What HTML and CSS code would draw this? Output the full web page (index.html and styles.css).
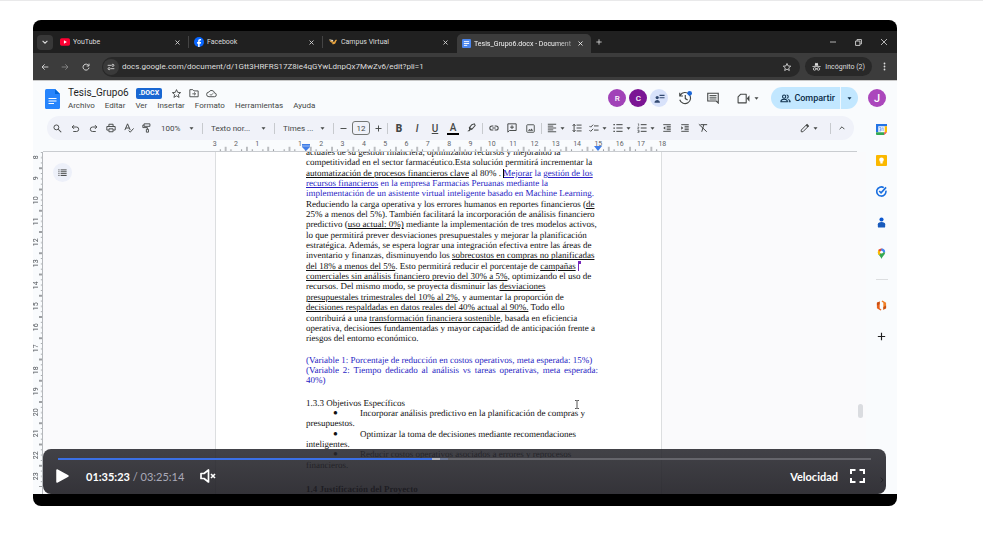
FILE: index.html
```html
<!DOCTYPE html>
<html lang="es">
<head>
<meta charset="utf-8">
<meta name="viewport" content="width=device-width, initial-scale=1">
<title>Grabación de clase</title>
<link rel="stylesheet" href="styles.css">
</head>
<body>
<svg class="sprite" aria-hidden="true">
  <symbol id="caret" viewBox="0 0 10 6"><path d="M1 0.5h8L5 5.5z" fill="currentColor"/></symbol>
  <symbol id="close" viewBox="0 0 10 10"><path d="M1 1l8 8M9 1l-8 8" stroke="currentColor" stroke-width="1.7" fill="none"/></symbol>
  <symbol id="star" viewBox="0 0 24 24"><path d="M12 3.5l2.6 6 6.4.5-4.900 4.200 1.500 6.300L12 17.100l-5.600 3.400 1.500-6.300L3 10l6.400-.5z" stroke="currentColor" stroke-width="2" fill="none"/></symbol>
  <symbol id="plus" viewBox="0 0 24 24"><path d="M12 4v16M4 12h16" stroke="currentColor" stroke-width="2.500" fill="none"/></symbol>
  <symbol id="docs" viewBox="0 0 24 24"><rect width="24" height="24" rx="3" fill="#4a86f0"/><path d="M5 7h14M5 12h14M5 17h9" stroke="#fff" stroke-width="2.500"/></symbol>
  <symbol id="indentlines" viewBox="0 0 24 24"><path d="M3 4h18M11 8h10M11 12h10M11 16h10M3 20h18" stroke="currentColor" stroke-width="2.200"/></symbol>
</svg>

<main class="player">
  <div class="video">
    <header class="tabs">
      <button class="tab-search" aria-label="Buscar pestañas"><svg class="i6" viewBox="0 0 10 10"><path d="M1 3l4 4 4-4" stroke="currentColor" stroke-width="1.800" fill="none"/></svg></button>
      <div class="tab">
        <svg class="i10" viewBox="0 0 24 24"><rect y="3" width="24" height="18" rx="4" fill="#f03"/><path d="M9.500 8v8l7-4z" fill="#fff"/></svg>
        <span class="tab-name">YouTube</span>
        <button aria-label="Cerrar YouTube"><svg class="i5"><use href="#close"/></svg></button>
      </div>
      <div class="tab">
        <svg class="i10" viewBox="0 0 24 24"><circle cx="12" cy="12" r="12" fill="#0866ff"/><path d="M10 24v-8H7.500v-4H10v-2c0-4 2-5.500 5.500-5.200l1.500.2v3.300h-2c-1.300 0-1.600.7-1.600 1.700v2H17l-.7 4h-2.900v8z" fill="#fff"/></svg>
        <span class="tab-name">Facebook</span>
        <button aria-label="Cerrar Facebook"><svg class="i5"><use href="#close"/></svg></button>
      </div>
      <div class="tab">
        <svg class="i10" viewBox="0 0 24 24"><path d="M2 6c4 5 7 2 9 4s3 2 5 0c1-3 3-4 6-3-2 1-2 3-3 5-1 5-6 7-10 4 2 0 3-1 3-2-4 0-8-2-10-8z" fill="#e8a33d"/><path d="M3 5c3 2 7 1 9 3s0 3-2 2-6-1-7-5z" fill="#f2e4c8"/></svg>
        <span class="tab-name">Campus Virtual</span>
        <button aria-label="Cerrar Campus Virtual"><svg class="i5"><use href="#close"/></svg></button>
      </div>
      <div class="tab tab-active">
        <svg class="i9"><use href="#docs"/></svg>
        <span class="tab-name">Tesis_Grupo6.docx - Document</span>
        <button aria-label="Cerrar Tesis_Grupo6"><svg class="i5"><use href="#close"/></svg></button>
      </div>
      <button class="tab-new" aria-label="Nueva pestaña"><svg class="i8"><use href="#plus"/></svg></button>
      <div class="window-buttons">
        <button aria-label="Minimizar"><svg class="i6" viewBox="0 0 10 10"><path d="M0 5h10" stroke="currentColor" stroke-width="1.300"/></svg></button>
        <button aria-label="Restaurar"><svg class="i7" viewBox="0 0 12 12"><path d="M1 3.500h7.500V11H1zM3.500 3V1H11v7.500H9" stroke="currentColor" stroke-width="1.500" fill="none"/></svg></button>
        <button aria-label="Cerrar ventana"><svg class="i6" viewBox="0 0 10 10"><path d="M0 0l10 10M10 0L0 10" stroke="currentColor" stroke-width="1.300"/></svg></button>
      </div>
    </header>

    <div class="address">
      <button aria-label="Atrás"><svg class="i8" viewBox="0 0 24 24"><path d="M22 12H4M11 4l-8 8 8 8" stroke="currentColor" stroke-width="2.600" fill="none"/></svg></button>
      <button class="dim" aria-label="Adelante"><svg class="i8" viewBox="0 0 24 24"><path d="M2 12h18M13 4l8 8-8 8" stroke="currentColor" stroke-width="2.600" fill="none"/></svg></button>
      <button aria-label="Recargar"><svg class="i8" viewBox="0 0 24 24"><path d="M20 8a9 9 0 1 0 1 6M21 2v7h-7" stroke="currentColor" stroke-width="2.800" fill="none"/></svg></button>
      <div class="omnibox">
        <button class="site-info" aria-label="Información del sitio"><svg class="i8" viewBox="0 0 24 24"><path d="M2 7h10M12 17h10" stroke="currentColor" stroke-width="2.600"/><circle cx="17.500" cy="7" r="3.200" stroke="currentColor" stroke-width="2.600" fill="none"/><circle cx="6.500" cy="17" r="3.200" stroke="currentColor" stroke-width="2.600" fill="none"/></svg></button>
        <input class="url" type="text" aria-label="Dirección" value="docs.google.com/document/d/1Gtt3HRFRS17Z8ie4qGYwLdnpQx7MwZv6/edit?pli=1">
        <button aria-label="Añadir a marcadores"><svg class="i10"><use href="#star"/></svg></button>
      </div>
      <button class="incognito"><svg class="i9" viewBox="0 0 24 24"><path d="M7 10l2-8 3 1 3-1 2 8zM1 11h22v2.500H1z" fill="currentColor"/><g fill="none" stroke="currentColor" stroke-width="2.200"><circle cx="7" cy="18.500" r="3.500"/><circle cx="17" cy="18.500" r="3.500"/><path d="M10 18h4"/></g></svg>Incógnito (2)</button>
      <button class="more" aria-label="Más"><svg class="i9" viewBox="0 0 24 24"><g fill="currentColor"><circle cx="12" cy="4" r="2.400"/><circle cx="12" cy="12" r="2.400"/><circle cx="12" cy="20" r="2.400"/></g></svg></button>
    </div>

    <div class="app">
      <header class="doc-header">
        <svg class="doc-logo" viewBox="0 0 30 40"><path d="M3 0h17l10 10v27a3 3 0 0 1-3 3H3a3 3 0 0 1-3-3V3a3 3 0 0 1 3-3z" fill="#2684fc"/><path d="M20 0l10 10H20z" fill="#0066da"/><path d="M7 19h16M7 24h16M7 29h11" stroke="#fff" stroke-width="2.200"/></svg>
        <div class="doc-id">
          <div class="doc-title">
            <h1>Tesis_Grupo6</h1><span class="badge">.DOCX</span>
            <button aria-label="Destacar"><svg class="i11"><use href="#star"/></svg></button>
            <button aria-label="Mover"><svg class="i10" viewBox="0 0 24 24"><path d="M2 4h7l3 3h10v14H2z" fill="none" stroke="currentColor" stroke-width="2.200"/><path d="M8 14h7M12 10.500l4 3.500-4 3.500" fill="none" stroke="currentColor" stroke-width="2"/></svg></button>
            <button aria-label="Estado"><svg class="i11" viewBox="0 0 24 24"><path d="M6.500 19a5 5 0 0 1-.3-10A6.500 6.500 0 0 1 18.500 11a4 4 0 0 1 0 8z" fill="none" stroke="currentColor" stroke-width="2"/><path d="M8.500 13.500l2.500 2.500 4.500-4.500" fill="none" stroke="currentColor" stroke-width="1.800"/></svg></button>
          </div>
          <nav class="menus"><button>Archivo</button><button>Editar</button><button>Ver</button><button>Insertar</button><button>Formato</button><button>Herramientas</button><button>Ayuda</button></nav>
        </div>
        <div class="doc-actions">
          <div class="people"><span class="avatar">R</span><span class="avatar avatar-dark">C</span><button class="avatar avatar-chat" aria-label="Chat"><svg class="i11" viewBox="0 0 24 24"><circle cx="7" cy="10" r="3.500" fill="currentColor"/><path d="M1 21c0-4 3-6 6-6s6 2 6 6zM12 4h11v2.500H12zM12 9h11v2.500H12z" fill="currentColor"/></svg></button></div>
          <button class="round" aria-label="Historial"><svg class="i14" viewBox="0 0 24 24"><path d="M4 7a9.500 9.500 0 1 1-1 8M3 3v5.500h5.500M12.500 7v6l4 2.500" fill="none" stroke="currentColor" stroke-width="2"/><circle cx="20" cy="4" r="4" fill="#1a66d8"/></svg></button>
          <button class="round" aria-label="Comentarios"><svg class="i12" viewBox="0 0 24 24"><path d="M1.500 2.500h21V22l-4-4h-17z" fill="none" stroke="currentColor" stroke-width="2.200"/><path d="M5 7h14M5 10.500h14M5 14h14" stroke="currentColor" stroke-width="1.800"/></svg></button>
          <button class="meet" aria-label="Reunión"><svg class="i13" viewBox="0 0 24 24"><path d="M7 4h10v16H2V9z" fill="none" stroke="currentColor" stroke-width="2" stroke-linejoin="round"/><path d="M18 12l5-6v12z" fill="currentColor"/></svg><svg class="caret"><use href="#caret"/></svg></button>
          <div class="share">
            <button class="share-main"><svg class="i11" viewBox="0 0 24 24"><g fill="none" stroke="currentColor" stroke-width="2.200"><circle cx="9" cy="8" r="3.500"/><path d="M2 19v-1c0-3 4-4.500 7-4.500s7 1.500 7 4.500v1zM14.500 4.500a3.500 3.500 0 0 1 0 7M18 14c2.500.8 4 2 4 4v1h-3"/></g></svg>Compartir</button>
            <button class="share-more" aria-label="Más opciones para compartir"><svg class="caret"><use href="#caret"/></svg></button>
          </div>
          <span class="avatar avatar-me">J</span>
        </div>
      </header>

      <div class="workspace">
        <section class="editor">
          <div class="toolbar">
            <button class="tool" aria-label="Buscar"><svg class="i9" viewBox="0 0 24 24"><circle cx="9" cy="9" r="6.500" fill="none" stroke="currentColor" stroke-width="2.500"/><path d="M14 14l8 8" stroke="currentColor" stroke-width="2.800"/></svg></button>
            <button class="tool" aria-label="Deshacer"><svg class="i9" viewBox="0 0 24 24"><path d="M8 3L3 8l5 5M3 8h11.500a5.500 5.500 0 0 1 0 12H6" fill="none" stroke="currentColor" stroke-width="2.500"/></svg></button>
            <button class="tool" aria-label="Rehacer"><svg class="i9" viewBox="0 0 24 24"><path d="M16 3l5 5-5 5M21 8H9.500a5.500 5.500 0 0 0 0 12H18" fill="none" stroke="currentColor" stroke-width="2.500"/></svg></button>
            <button class="tool" aria-label="Imprimir"><svg class="i10" viewBox="0 0 24 24"><path d="M7 8V3h10v5M6 17H2V8.500h20V17h-4M7 14h10v7H7z" fill="none" stroke="currentColor" stroke-width="2.300"/></svg></button>
            <button class="tool" aria-label="Ortografía"><svg class="i10" viewBox="0 0 24 24"><path d="M2 17L8.500 2 15 17M4.500 12h8M11 18l4 4 8-9" fill="none" stroke="currentColor" stroke-width="2.300"/></svg></button>
            <button class="tool" aria-label="Copiar formato"><svg class="i10" viewBox="0 0 24 24"><path d="M5 2h14v6H5zM5 5H2v6h11v4M10.500 15h5v7h-5z" fill="none" stroke="currentColor" stroke-width="2.200"/></svg></button>
            <label class="pick pick-zoom"><select aria-label="Zoom"><option>100%</option></select><svg class="caret"><use href="#caret"/></svg></label>
            <i class="sep"></i>
            <label class="pick pick-style"><select aria-label="Estilo"><option>Texto nor...</option></select><svg class="caret"><use href="#caret"/></svg></label>
            <i class="sep"></i>
            <label class="pick pick-font"><select aria-label="Fuente"><option>Times ...</option></select><svg class="caret"><use href="#caret"/></svg></label>
            <i class="sep"></i>
            <button class="step" aria-label="Reducir tamaño"><svg class="i9" viewBox="0 0 24 24"><path d="M4 12h16" stroke="currentColor" stroke-width="2.500"/></svg></button>
            <input class="size" type="text" aria-label="Tamaño de fuente" value="12">
            <button class="step" aria-label="Aumentar tamaño"><svg class="i9"><use href="#plus"/></svg></button>
            <i class="sep"></i>
            <button class="tool glyph bold">B</button>
            <button class="tool glyph italic">I</button>
            <button class="tool glyph under">U</button>
            <button class="tool glyph color">A</button>
            <button class="tool" aria-label="Resaltar"><svg class="i10" viewBox="0 0 24 24"><path d="M14 4l6-2 2 4-8 9-5 1-1-5zM9 11l5 4" fill="none" stroke="currentColor" stroke-width="2.500"/><path d="M3 20l6-5 2 2-3 3z" fill="currentColor"/></svg></button>
            <i class="sep"></i>
            <button class="tool" aria-label="Enlace"><svg class="i10" viewBox="0 0 24 24"><path d="M10.500 7H7a5 5 0 0 0 0 10h3.500M13.500 7H17a5 5 0 0 1 0 10h-3.500M8 12h8" fill="none" stroke="currentColor" stroke-width="2.500"/></svg></button>
            <button class="tool" aria-label="Comentar"><svg class="i10" viewBox="0 0 24 24"><path d="M2 2h20v16H6l-4 4zM12 5.500v9M7.500 10h9" fill="none" stroke="currentColor" stroke-width="2.300"/></svg></button>
            <button class="tool" aria-label="Imagen"><svg class="i9" viewBox="0 0 24 24"><rect x="2" y="2" width="20" height="20" rx="2" fill="none" stroke="currentColor" stroke-width="2.400"/><path d="M5 18l4-5 3 3 3-4 4 6z" fill="currentColor"/></svg></button>
            <i class="sep"></i>
            <button class="split" aria-label="Alinear"><svg class="i10" viewBox="0 0 24 24"><path d="M2 3h20M2 7.500h13M2 12h20M2 16.500h13M2 21h20" stroke="currentColor" stroke-width="2.200"/></svg><svg class="caret"><use href="#caret"/></svg></button>
            <button class="tool" aria-label="Interlineado"><svg class="i10" viewBox="0 0 24 24"><path d="M11 5h12M11 12h12M11 19h12M5 3v18M1.500 7L5 3l3.500 4M1.500 17L5 21l3.500-4" fill="none" stroke="currentColor" stroke-width="2.300"/></svg></button>
            <button class="split" aria-label="Lista de control"><svg class="i10" viewBox="0 0 24 24"><path d="M12 7h11M12 17h11M1 7l3 3 6-6M1 17l3 3 6-6" fill="none" stroke="currentColor" stroke-width="2.300"/></svg><svg class="caret"><use href="#caret"/></svg></button>
            <button class="split" aria-label="Lista con viñetas"><svg class="i10" viewBox="0 0 24 24"><path d="M8 4h15M8 12h15M8 20h15" stroke="currentColor" stroke-width="2.400"/><path d="M1 2.500h3.500v3H1zM1 10.500h3.500v3H1zM1 18.500h3.500v3H1z" fill="currentColor"/></svg><svg class="caret"><use href="#caret"/></svg></button>
            <button class="split" aria-label="Lista numerada"><svg class="i10" viewBox="0 0 24 24"><path d="M9 4h14M9 12h14M9 20h14" stroke="currentColor" stroke-width="2.400"/><path d="M2 2h2v5M1 10h4l-3.500 4H5M1 17.500h4v5H1M2.500 20H5" fill="none" stroke="currentColor" stroke-width="1.500"/></svg><svg class="caret"><use href="#caret"/></svg></button>
            <button class="tool" aria-label="Reducir sangría"><svg class="i10" viewBox="0 0 24 24"><use href="#indentlines"/><path d="M8 8v8l-5-4z" fill="currentColor"/></svg></button>
            <button class="tool" aria-label="Aumentar sangría"><svg class="i10" viewBox="0 0 24 24"><use href="#indentlines"/><path d="M3 8v8l5-4z" fill="currentColor"/></svg></button>
            <button class="tool" aria-label="Borrar formato"><svg class="i10" viewBox="0 0 24 24"><path d="M6 4h16M14 4l-5 17M2 3l19 18" fill="none" stroke="currentColor" stroke-width="2.400"/></svg></button>
            <button class="split mode" aria-label="Modo de edición"><svg class="i10" viewBox="0 0 24 24"><path d="M3 21v-4L16 4l4 4L7 21z" fill="none" stroke="currentColor" stroke-width="2.400"/><path d="M14 6l3-4 5 5-4 3z" fill="currentColor"/></svg><svg class="caret"><use href="#caret"/></svg></button>
            <i class="sep"></i>
            <button class="tool" aria-label="Ocultar menús"><svg class="i6" viewBox="0 0 10 10"><path d="M1 7l4-4 4 4" stroke="currentColor" stroke-width="1.600" fill="none"/></svg></button>
          </div>

          <div class="ruler-h">
            <div class="ruler-scale">
              <svg class="ticks-h" viewBox="0 0 84 6" preserveAspectRatio="none"><defs><pattern id="th" width="4" height="6" patternUnits="userSpaceOnUse"><path d="M1 4v2M3 4v2" stroke="#9a9da1" stroke-width=".2"/><path d="M2 1v5" stroke="#85888c" stroke-width=".2"/></pattern></defs><rect width="84" height="6" fill="url(#th)"/></svg>
              <ol class="marks-h"><li>3</li><li>2</li><li>1</li><li></li><li>1</li><li>2</li><li>3</li><li>4</li><li>5</li><li>6</li><li>7</li><li>8</li><li>9</li><li>10</li><li>11</li><li>12</li><li>13</li><li>14</li><li>15</li><li>16</li><li>17</li><li>18</li></ol>
              <svg class="stop stop-left" viewBox="0 0 8 7"><path d="M0 0h8v3L4 7 0 3z" fill="#3f7de8"/><path d="M0 2h8" stroke="#fff" stroke-width=".5"/></svg>
              <svg class="stop stop-right" viewBox="0 0 8 7"><path d="M0 2h8L4 7z" fill="#3f7de8"/></svg>
            </div>
          </div>

          <div class="stage">
            <div class="ruler-v">
              <ol><li>8</li><li>9</li><li>10</li><li>11</li><li>12</li><li>13</li><li>14</li><li>15</li><li>16</li><li>17</li><li>18</li><li>19</li><li>20</li><li>21</li><li>22</li><li>23</li></ol>
              <svg class="ticks-v" viewBox="0 0 5 64" preserveAspectRatio="none"><defs><pattern id="tv" width="5" height="4" patternUnits="userSpaceOnUse"><path d="M3 1h2M3 3h2M3 2h2" stroke="#a5a8ac" stroke-width=".2"/><path d="M0 0h5M0 4h5" stroke="#7d8084" stroke-width=".3"/></pattern></defs><rect width="5" height="64" fill="url(#tv)"/></svg>
            </div>
            <div class="canvas">
              <div class="outline"><button aria-label="Mostrar esquema"><svg class="i9" viewBox="0 0 24 24"><path d="M7 5h16M7 10h16M7 15h16M7 20h16M1 5h3M1 10h3M1 15h3M1 20h3" stroke="currentColor" stroke-width="2.500"/></svg></button></div>
              <article class="page">
                <p>
                  <span class="ln">actuales de su gestión financiera, optimizando recursos y mejorando la</span>
                  <span class="ln">competitividad en el sector farmacéutico.Esta solución permitirá incrementar la</span>
                  <span class="ln"><u>automatización de procesos financieros clave</u> al 80% . <i class="cursor"></i><span class="blue"><u>Mejorar</u> la <u>gestión de los</u></span></span>
                  <span class="ln blue"><u>recursos financieros</u> en la empresa Farmacias Peruanas mediante la</span>
                  <span class="ln blue">implementación de un asistente virtual inteligente basado en Machine Learning.</span>
                  <span class="ln">Reduciendo la carga operativa y los errores humanos en reportes financieros (<u>de</u></span>
                  <span class="ln">25% a menos del 5%). También facilitará la incorporación de análisis financiero</span>
                  <span class="ln">predictivo (<u>uso actual: 0%)</u> mediante la implementación de tres modelos activos,</span>
                  <span class="ln">lo que permitirá prever desviaciones presupuestales y mejorar la planificación</span>
                  <span class="ln">estratégica. Además, se espera lograr una integración efectiva entre las áreas de</span>
                  <span class="ln">inventario y finanzas, disminuyendo los <u>sobrecostos en compras no planificadas</u></span>
                  <span class="ln"><u>del 18% a menos del 5%</u>. Esto permitirá reducir el porcentaje de <u>campañas</u> <i class="cursor peer"></i></span>
                  <span class="ln"><u>comerciales sin análisis financiero previo del 30% a 5%</u>, optimizando el uso de</span>
                  <span class="ln">recursos. Del mismo modo, se proyecta disminuir las <u>desviaciones</u></span>
                  <span class="ln"><u>presupuestales trimestrales del 10% al 2%</u>, y aumentar la proporción de</span>
                  <span class="ln"><u>decisiones respaldadas en datos reales del 40% actual al 90%.</u> Todo ello</span>
                  <span class="ln">contribuirá a una <u>transformación financiera sostenible</u>, basada en eficiencia</span>
                  <span class="ln">operativa, decisiones fundamentadas y mayor capacidad de anticipación frente a</span>
                  <span class="ln">riesgos del entorno económico.</span>
                </p>
                <p class="blue">
                  <span class="ln">(Variable 1: Porcentaje de reducción en costos operativos, meta esperada: 15%)</span>
                  <span class="ln wide">(Variable 2: Tiempo dedicado al análisis vs tareas operativas, meta esperada:</span>
                  <span class="ln">40%)</span>
                </p>
                <h2>1.3.3 Objetivos Específicos</h2>
                <ul>
                  <li><span class="ln first">Incorporar análisis predictivo en la planificación de compras y</span><span class="ln">presupuestos.</span></li>
                  <li><span class="ln first">Optimizar la toma de decisiones mediante recomendaciones</span><span class="ln">inteligentes.</span></li>
                  <li><span class="ln first">Reducir costos operativos asociados a errores y reprocesos</span><span class="ln">financieros.</span></li>
                </ul>
                <h2 class="strong">1.4 Justificación del Proyecto</h2>
              </article>
              <div class="gutter"><i class="scroll-thumb"></i>
                <svg class="ibeam" viewBox="0 0 6 9"><path d="M1 .5h1.500l.5.5.5-.5H5M3 1v7M1 8.500h1.500L3 8l.5.5H5" fill="none" stroke="#444" stroke-width=".9"/></svg>
              </div>
            </div>
          </div>
        </section>

        <aside class="side">
          <button aria-label="Calendar"><svg class="i11" viewBox="0 0 24 24"><path d="M1 1h22v17l-5 5H1z" fill="#fff"/><path d="M0 0h24v5H5v13H0z" fill="#2474e5"/><path d="M0 18h18v6H2a2 2 0 0 1-2-2z" fill="#34a853"/><path d="M19 5h5v13h-5z" fill="#fbbc04"/><path d="M18 18h6l-6 6z" fill="#ea4335"/><path d="M7 8h4v7H7M8 11.500h3M13.500 9l2-1v7.500" fill="none" stroke="#4285f4" stroke-width="1.500"/></svg></button>
          <button aria-label="Keep"><svg class="i11" viewBox="0 0 24 24"><rect width="24" height="24" rx="2" fill="#fbb800"/><circle cx="12" cy="10.500" r="5" fill="#fff"/><path d="M9.500 14h5v4.500h-5z" fill="#fff"/></svg></button>
          <button aria-label="Tasks"><svg class="i11" viewBox="0 0 24 24"><path d="M17 3.500A10 10 0 1 0 21.500 10" fill="none" stroke="#1a6fe0" stroke-width="3.500"/><path d="M7 11l4 4L22 3" fill="none" stroke="#1a6fe0" stroke-width="3.500"/></svg></button>
          <button aria-label="Contactos"><svg class="i11" viewBox="0 0 24 24"><circle cx="12" cy="5.500" r="4.500" fill="#0b57d0"/><path d="M4 21v-5c0-3 3-5 8-5s8 2 8 5v5c0 1-1 2-2 2H6c-1 0-2-1-2-2z" fill="#185abc"/></svg></button>
          <button aria-label="Maps"><svg class="i11" viewBox="0 0 24 24"><path d="M12 24c-1-5-8-9-8-15h16c0 6-7 10-8 15z" fill="#34a853"/><path d="M4 9c0 3 1 5 3 7l6-8-7-5a8 8 0 0 0-2 6z" fill="#fbbc04"/><path d="M5 4.500l5 5L16 2A9 9 0 0 0 5 4.500z" fill="#ea4335"/><path d="M12 1a8 8 0 0 1 8 8h-6L11 5z" fill="#4285f4"/><circle cx="12" cy="9" r="3" fill="#fff"/></svg></button>
          <hr>
          <button aria-label="Complemento"><svg class="i11" viewBox="0 0 24 24"><path d="M2 6l6-3v15l4 3-2 2-8-5z" fill="#e8601a"/><path d="M22 18l-6 3V6l-4-3 2-2 8 5z" fill="#f08028"/><path d="M2 6l6-3v6l-6 3zM22 18l-6 3v-6l6-3z" fill="#c94f12"/></svg></button>
          <button aria-label="Obtener complementos"><svg class="i11"><use href="#plus"/></svg></button>
          <button class="side-hide" aria-label="Ocultar panel"><svg class="i6" viewBox="0 0 10 10"><path d="M3 1l4 4-4 4" stroke="currentColor" stroke-width="1.600" fill="none"/></svg></button>
        </aside>
      </div>
    </div>
  </div>

  <div class="controls">
    <input class="seek" type="range" min="0" max="12314" value="5723" aria-label="Progreso">
    <div class="control-row">
      <button aria-label="Reproducir"><svg class="play" viewBox="0 0 13 14"><path d="M1 1v12l11-6z" fill="#fff" stroke="#fff" stroke-width="1.500" stroke-linejoin="round"/></svg></button>
      <span class="time">01:35:23<span class="total"> / 03:25:14</span></span>
      <button aria-label="Activar sonido"><svg class="volume" viewBox="0 0 16 14"><path d="M1 4.500h3L8.500 1v12L4 9.500H1z" fill="none" stroke="#fff" stroke-width="1.700" stroke-linejoin="round"/><path d="M11 5l4 4M15 5l-4 4" stroke="#fff" stroke-width="1.600"/></svg></button>
      <button class="speed">Velocidad</button>
      <button aria-label="Pantalla completa"><svg class="full" viewBox="0 0 15 14"><path d="M1 5V1h4.500M9.500 1H14v4M14 9v4H9.500M5.500 13H1V9" fill="none" stroke="#fff" stroke-width="2"/></svg></button>
    </div>
  </div>
</main>
</body>
</html>
```
FILE: styles.css
```css
* { box-sizing: border-box; }

body {
  margin: 0;
  background: #fff;
  border-top: 1px solid #e9e9ea;
  font-family: Roboto, "Liberation Sans", sans-serif;
}

button, input, select {
  margin: 0;
  padding: 0;
  border: 0;
  background: none;
  color: inherit;
  font: inherit;
}

button {
  display: inline-flex;
  align-items: center;
  justify-content: center;
  flex: none;
}

svg { display: block; flex: none; }
ol, ul { margin: 0; padding: 0; list-style: none; }

.sprite { position: absolute; width: 0; height: 0; }
.i5 { width: 5px; height: 5px; }
.i6 { width: 6px; height: 6px; }
.i7 { width: 7px; height: 7px; }
.i8 { width: 8px; height: 8px; }
.i9 { width: 9px; height: 9px; }
.i10 { width: 10px; height: 10px; }
.i11 { width: 11px; height: 11px; }
.i12 { width: 12px; height: 12px; }
.i13 { width: 13px; height: 13px; }
.i14 { width: 14px; height: 14px; }
.caret { width: 5px; height: 3px; }

/* Player frame */
.player {
  position: relative;
  display: flex;
  aspect-ratio: 16 / 9;
  margin: 19px 86px 0 33px;
  padding: 11px 0 12px;
  border-radius: 8px;
  background: #000;
  overflow: hidden;
}

.video {
  flex: 1;
  min-width: 0;
  display: flex;
  flex-direction: column;
  overflow: hidden;
}

/* Browser tabs */
.tabs {
  display: flex;
  align-items: center;
  height: 22px;
  flex: none;
  padding-left: 4px;
  background: #202020;
  color: #dcdcdc;
  font: 7px Roboto, sans-serif;
}

.tab-search {
  width: 16px;
  height: 15px;
  margin-right: 2px;
  border-radius: 4px;
  background: #383838;
}

.tab {
  display: flex;
  align-items: center;
  gap: 3px;
  width: 134px;
  height: 12px;
  padding: 0 8px 0 5px;
  border-right: 1px solid #444;
}

.tab:nth-of-type(3) { border-color: transparent; }

.tab-active {
  height: 19px;
  align-self: flex-end;
  border: 0;
  border-radius: 5px 5px 0 0;
  background: #3c3c3c;
  color: #f2f2f2;
}

.tab-name {
  flex: 1;
  min-width: 0;
  overflow: hidden;
  white-space: nowrap;
}

.tab-active .tab-name { mask-image: linear-gradient(90deg, #000 80%, rgba(0, 0, 0, 0.4)); }
.tab-new { margin-left: 4px; }
.window-buttons { display: flex; gap: 19px; margin-left: auto; padding-right: 10px; }

/* Address bar */
.address {
  display: flex;
  align-items: center;
  height: 27px;
  flex: none;
  padding: 0 8px;
  background: #3c3c3c;
  color: #dedede;
  font: 7px Roboto, sans-serif;
}

.address > button { margin-right: 12px; }
.address > .dim { color: #8a8a8a; margin-right: 13px; }

.omnibox {
  display: flex;
  align-items: center;
  flex: 1;
  height: 20px;
  padding: 0 8px 0 1px;
  border-radius: 10px;
  background: #282828;
}

.site-info { width: 16px; height: 16px; border-radius: 8px; background: #3a3a3a; }
.url { flex: 1; min-width: 0; height: 16px; padding: 0 3px; font-size: 8px; }
.address .incognito { height: 19px; gap: 4px; margin: 0 8px 0 5px; padding: 0 7px; border-radius: 10px; background: #282828; }
.address .more { margin: 0; }

/* Document application */
.app {
  flex: 1;
  min-height: 0;
  display: flex;
  flex-direction: column;
  border-top: 1px solid #c8c8c8;
  background: #f9fbfd;
  color: #444746;
}

.doc-header { display: flex; flex: none; height: 35px; padding: 0 11px 0 12px; }
.doc-logo { width: 15px; height: 20px; margin-top: 8px; }
.doc-id { margin-left: 8px; padding-top: 6px; }

.doc-title { display: flex; align-items: center; gap: 7px; height: 12px; }
.doc-title h1 { margin: 0; color: #1f1f1f; font: 10px/12px Roboto, sans-serif; }

.badge {
  margin-right: 2px;
  padding: 0 3px;
  border-radius: 2px;
  background: #1967d2;
  color: #fff;
  font: bold 7px/11px Roboto, sans-serif;
}

.menus { display: flex; gap: 10px; height: 12px; font-size: 8px; }

.doc-actions { display: flex; align-items: center; height: 34px; margin-left: auto; }
.people { display: flex; gap: 3px; }

.avatar {
  display: flex;
  align-items: center;
  justify-content: center;
  width: 18px;
  height: 18px;
  border-radius: 9px;
  background: #a142b8;
  color: #fff;
  font: 500 8px Roboto, sans-serif;
}

.avatar-dark { background: #7b1594; }
.avatar-chat { background: #d8e2fa; color: #334a70; }
.avatar-me { margin-left: 10px; background: #ab47bc; font-size: 11px; }
.round { width: 14px; margin-left: 10px; }
.round + .round { margin-left: 14px; }
.meet { gap: 4px; margin-left: 17px; }

.share {
  display: flex;
  height: 22px;
  margin-left: 12px;
  border-radius: 11px;
  background: #c2e7ff;
  color: #0b2c48;
  overflow: hidden;
}

.share-main { gap: 3px; padding: 0 5px 0 9px; border-right: 1px solid #eef8ff; font: 500 9px Roboto, sans-serif; }
.share-more { width: 17px; }

.workspace { display: flex; flex: 1; min-height: 0; }
.editor { display: flex; flex-direction: column; flex: 1; min-width: 0; }

.toolbar {
  display: flex;
  align-items: center;
  flex: none;
  height: 24px;
  margin: 0 12px 0 14px;
  padding-left: 1px;
  border-radius: 12px;
  background: #f0f2f9;
  font-size: 8px;
}

.tool { width: 18px; height: 18px; }
.step { width: 14px; height: 18px; }
.split { width: 24px; height: 18px; gap: 3px; }
.sep { flex: none; width: 1px; height: 11px; margin: 0 2px; background: #c7cace; }
.mode { margin-left: auto; }
.mode + .sep { margin-left: 9px; }
.toolbar > .tool:last-child { margin-right: 3px; }

.pick { display: flex; align-items: center; flex: none; padding: 0 6px; }
.pick select { flex: 1; min-width: 0; appearance: none; }
.pick-zoom { width: 44px; padding-left: 5px; }
.pick-style { width: 67px; }
.pick-font { width: 54px; }

.size { width: 18px; height: 14px; margin: 0 1px 0 2px; border: 1px solid #747775; border-radius: 3px; text-align: center; }
.glyph { font: 500 10px Roboto, sans-serif; }
.bold { font-weight: 900; }
.italic { font-style: italic; }
.under { text-decoration: underline; }
.color { width: 12px; height: 13px; margin: 0 3px; border-bottom: 2px solid #000; }

/* Rulers share the column split of the canvas */
.ruler-h, .canvas { display: grid; grid-template-columns: 172fr 447px 204fr; }
.ruler-h { flex: none; height: 12px; margin-left: 10px; margin-right: 9px; border-bottom: 1px solid #c9ccd0; grid-template-columns: 172fr 447px 195fr; }
.ruler-scale { position: relative; grid-column: 2; }

.marks-h {
  display: grid;
  grid-template-columns: repeat(22, 1fr);
  margin: 0 -11px;
  color: #5f6368;
  font: 7px/8px Roboto, sans-serif;
  text-align: center;
}

.ticks-h { position: absolute; left: 0; bottom: 0; width: 100%; height: 5px; }
.stop { position: absolute; bottom: 0; width: 8px; height: 7px; }
.stop-left { left: 87px; }
.stop-right { right: 60px; }

.stage { display: flex; flex: 1; min-height: 0; overflow: hidden; }

.ruler-v { position: relative; flex: none; width: 10px; border-right: 1px solid #b5b8bc; }
.ruler-v ol {
  display: grid;
  grid-template-rows: repeat(16, 1fr);
  height: 340px;
  margin-top: -5px;
  color: #4b4f54;
  font: 7px/7px Roboto, sans-serif;
  text-align: center;
}
.ruler-v li { width: 7px; writing-mode: vertical-rl; transform: rotate(180deg); }
.ticks-v { position: absolute; top: -5px; right: 0; width: 3px; height: 340px; }

.canvas { position: relative; flex: 1; min-width: 0; background: #fafafc; }
.outline { padding: 10px 0 0 10px; }
.outline button { width: 19px; height: 19px; border-radius: 10px; background: #edf0f9; }

.page {
  border: solid #dcdee0;
  border-width: 0 1px;
  padding: 0 63px 0 90px;
  background: #fff;
  color: #111;
  font: 9px/1.15 "Liberation Serif", serif;
  text-rendering: geometricPrecision;
}

.page p { margin: -5px 0 0; }
.page p + p { margin-top: 11px; }
.page h2 { margin: 12px 0 0; font: inherit; }
.page h2.strong { margin-top: 14px; font-weight: bold; }
.ln { display: block; white-space: nowrap; }
.wide { text-align-last: justify; }
.blue { color: #2a1fc4; }
.first { display: flex; }
.first::before { content: "●"; width: 27px; margin-left: 27px; font-size: 8px; }

.cursor { position: relative; display: inline-block; width: 1px; height: 9px; margin-right: -1px; vertical-align: -2px; background: #000; }
.cursor.peer { background: #7627bb; }
.cursor.peer::after { content: ""; position: absolute; top: -1px; left: 0; width: 3px; height: 3px; background: #7627bb; }

.scroll-thumb { position: absolute; top: 252px; right: 3px; width: 5px; height: 14px; border-radius: 3px; background: #dadce0; }
.ibeam { position: absolute; top: 248px; left: 531px; width: 6px; height: 9px; }

.side { display: flex; flex-direction: column; align-items: center; gap: 20px; width: 31px; padding-top: 8px; color: #1f1f1f; }
.side hr { width: 12px; height: 1px; margin: 0; border: 0; background: #dcdee0; }
.side-hide { margin: auto 0 11px; }

/* Player controls */
.controls {
  position: absolute;
  left: 10px;
  right: 11px;
  bottom: 12px;
  padding: 9px 15px 0;
  height: 45px;
  border-radius: 8px;
  background: linear-gradient(rgba(40, 40, 46, 0.88), rgba(30, 29, 35, 0.9));
  color: #fff;
  font: bold 11px Lato, sans-serif;
}

.seek {
  display: block;
  width: 100%;
  height: 2px;
  appearance: none;
  background: linear-gradient(90deg, #3b70e6 46%, #b4b5bd 46%, #b4b5bd 47%, #6b7896 47%, #6b7896 48%, #65656b 48%);
}
.seek::-webkit-slider-thumb { appearance: none; width: 2px; height: 2px; }

.control-row { display: flex; align-items: center; height: 32px; padding: 0 6px 0 0; }
.play { width: 13px; height: 14px; margin-left: -2px; }
.time { margin: 0 16px 0 17px; }
.total { color: #aaa9b8; font-weight: normal; white-space: pre; }
.volume { width: 16px; height: 14px; }
.speed { margin-left: auto; }
.full { width: 15px; height: 14px; margin-left: 12px; }
```
